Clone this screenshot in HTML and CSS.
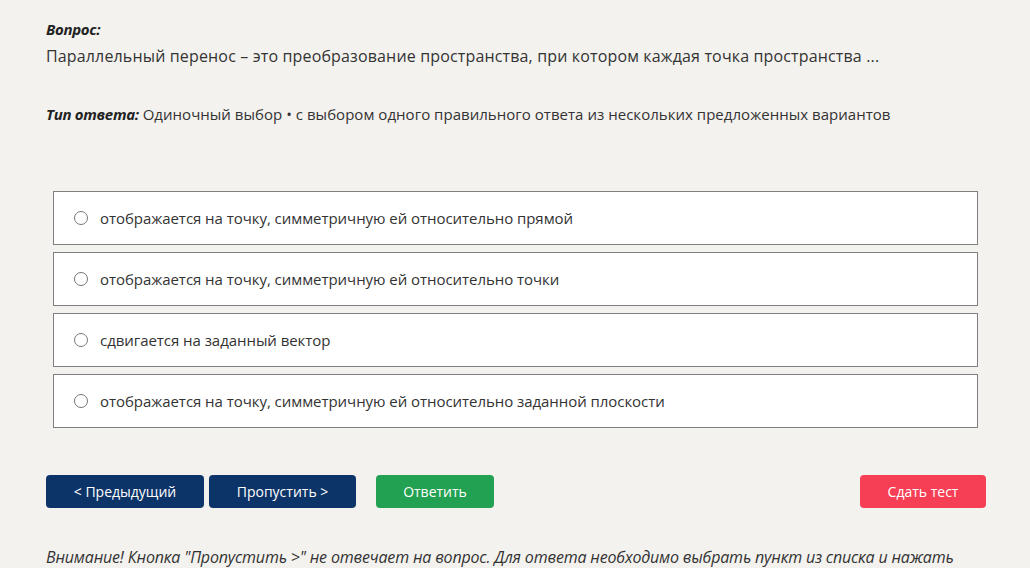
FILE: index.html
```html
<!DOCTYPE html>
<html lang="ru">
<head>
<meta charset="utf-8">
<link rel="stylesheet" href="styles.css">
</head>
<body>
<div class="page">
  <div class="label">Вопрос:</div>
  <div class="question">Параллельный перенос – это преобразование пространства, при котором каждая точка пространства ...</div>
  <div class="type"><span class="type-label">Тип ответа:</span> Одиночный выбор • с выбором одного правильного ответа из нескольких предложенных вариантов</div>
  <div class="options">
    <label class="option"><span class="radio"></span><span>отображается на точку, симметричную ей относительно прямой</span></label>
    <label class="option"><span class="radio"></span><span>отображается на точку, симметричную ей относительно точки</span></label>
    <label class="option"><span class="radio"></span><span>сдвигается на заданный вектор</span></label>
    <label class="option"><span class="radio"></span><span>отображается на точку, симметричную ей относительно заданной плоскости</span></label>
  </div>
  <div class="buttons">
    <button class="btn btn-navy btn-prev">&lt; Предыдущий</button>
    <button class="btn btn-navy btn-skip">Пропустить &gt;</button>
    <button class="btn btn-green btn-answer">Ответить</button>
    <span class="spacer"></span>
    <button class="btn btn-red btn-submit">Сдать тест</button>
  </div>
  <div class="note">Внимание! Кнопка "Пропустить &gt;" не отвечает на вопрос. Для ответа необходимо выбрать пункт из списка и нажать</div>
</div>
</body>
</html>
```
FILE: styles.css
```css
html, body {
  margin: 0;
  padding: 0;
  background: #f3f2ef;
}
body {
  font-family: "Open Sans", "Noto Sans", sans-serif;
  color: #222;
  overflow: hidden;
}
.page {
  width: 940px;
  margin-left: 46px;
  padding-top: 18px;
}
.label {
  font-style: italic;
  font-weight: 700;
  font-size: 15px;
  line-height: 22px;
  color: #222;
  letter-spacing: -0.3px;
}
.question {
  font-size: 16px;
  line-height: 24px;
  margin-top: 4px;
  color: #333;
  letter-spacing: 0.15px;
}
.type {
  margin-top: 35px;
  font-size: 15px;
  line-height: 22px;
  color: #333;
  letter-spacing: 0.03px;
}
.type-label {
  font-style: italic;
  font-weight: 700;
  color: #222;
  letter-spacing: -0.3px;
}
.options {
  margin: 66px 8px 0 7px;
  display: flex;
  flex-direction: column;
  gap: 7px;
}
.option {
  display: flex;
  align-items: center;
  height: 52px;
  background: #fff;
  border: 1px solid #7f7f7f;
  padding-left: 20px;
  font-size: 15px;
  color: #333;
  letter-spacing: -0.05px;
}
.radio {
  width: 12px;
  height: 12px;
  border: 1px solid #777;
  border-radius: 50%;
  margin-right: 12px;
  flex: none;
}
.buttons {
  display: flex;
  align-items: center;
  margin-top: 47px;
  height: 33px;
}
.btn {
  height: 33px;
  border: none;
  border-radius: 4px;
  color: #fff;
  font-family: "Open Sans", "Noto Sans", sans-serif;
  font-size: 14px;
  padding: 0;
  cursor: pointer;
}
.btn-navy { background: #0d3468; }
.btn-green { background: #23a152; }
.btn-red { background: #f63f55; }
.btn-prev { width: 158px; }
.btn-skip { width: 147px; margin-left: 5px; }
.btn-answer { width: 118px; margin-left: 20px; }
.spacer { flex: 1; }
.btn-submit { width: 126px; }
.note {
  margin-top: 37px;
  font-style: italic;
  font-size: 16px;
  line-height: 24px;
  color: #333;
  letter-spacing: -0.17px;
  white-space: nowrap;
}
```
